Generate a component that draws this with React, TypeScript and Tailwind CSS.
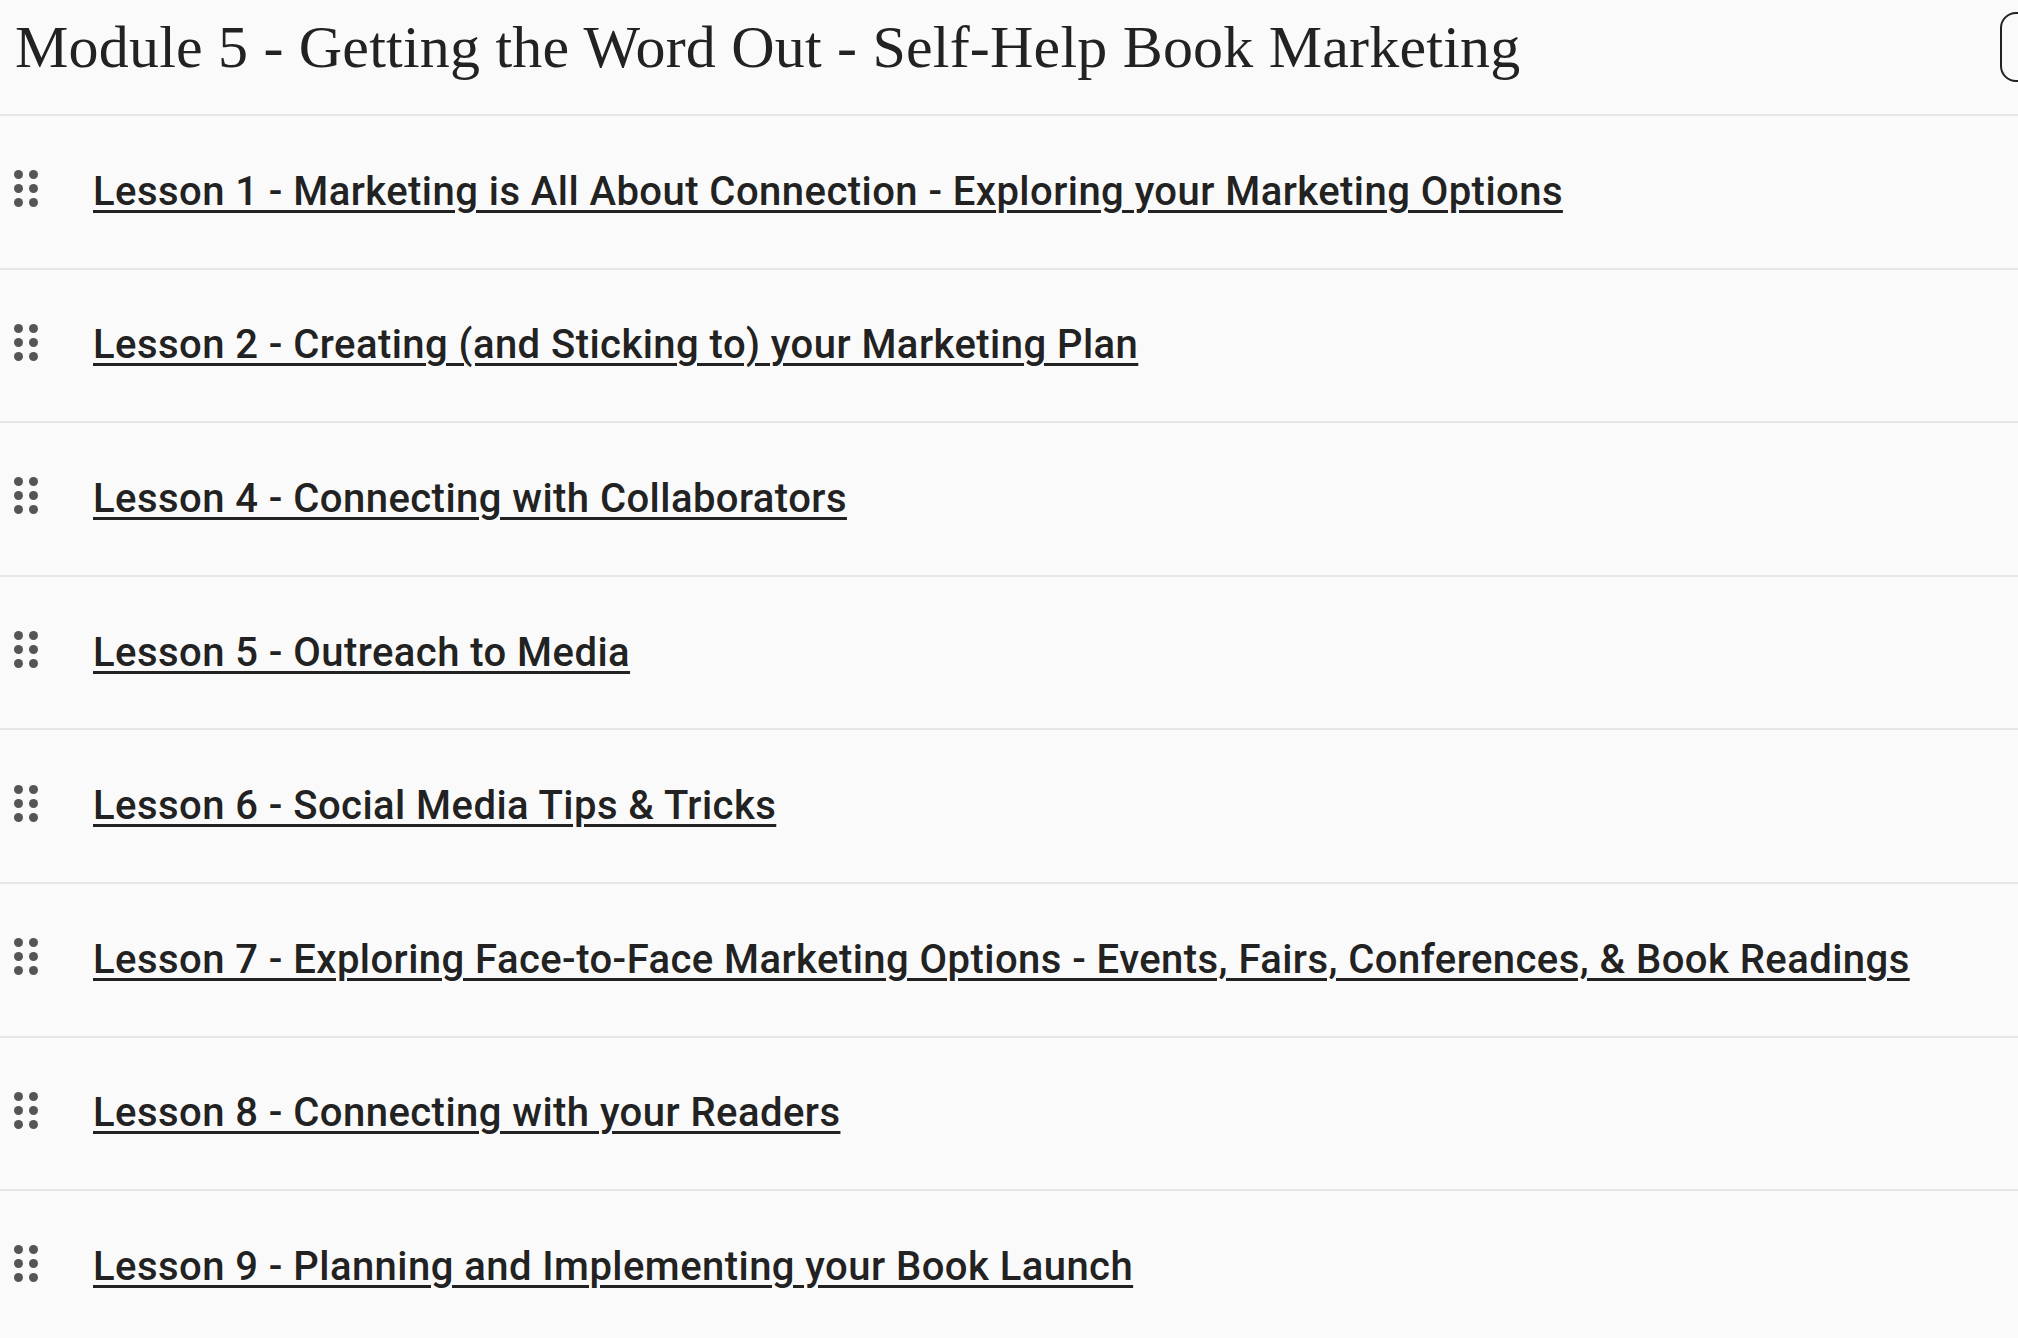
const lessons = [
  "Lesson 1 - Marketing is All About Connection - Exploring your Marketing Options",
  "Lesson 2 - Creating (and Sticking to) your Marketing Plan",
  "Lesson 4 - Connecting with Collaborators",
  "Lesson 5 - Outreach to Media",
  "Lesson 6 - Social Media Tips & Tricks",
  "Lesson 7 - Exploring Face-to-Face Marketing Options - Events, Fairs, Conferences, & Book Readings",
  "Lesson 8 - Connecting with your Readers",
  "Lesson 9 - Planning and Implementing your Book Launch",
];

const DragHandle = () => (
  <div className="grid grid-cols-2 gap-x-[6px] gap-y-[5px] w-[24px] mt-[-6px]">
    {Array.from({ length: 6 }).map((_, i) => (
      <span key={i} className="w-[9px] h-[9px] rounded-full bg-[#555555]" />
    ))}
  </div>
);

const App = () => {
  return (
    <div className="w-[2018px] h-[1338px] overflow-hidden bg-[#fafafa] text-[#222222]">
      <div className="flex items-start h-[116px] border-b-2 border-[#e6e6e6]">
        <h1
          className="flex-1 pl-[15px] pt-[12px] text-[60px] leading-[70px] font-normal tracking-[0.2px]"
          style={{ fontFamily: '"Liberation Serif", "Times New Roman", serif' }}
        >
          Module 5 - Getting the Word Out - Self-Help Book Marketing
        </h1>
        <button className="mt-[12px] mr-[-60px] w-[78px] h-[70px] shrink-0 rounded-[16px] border-2 border-[#222222] bg-[#fafafa]" />
      </div>

      <ul style={{ fontFamily: "Roboto, Inter, sans-serif" }}>
        {lessons.map((title) => (
          <li
            key={title}
            className="flex items-center h-[153.6px] border-b-2 border-[#e6e6e6]"
          >
            <div className="pl-[14px] w-[93px] shrink-0">
              <DragHandle />
            </div>
            <a
              href="#"
              className="text-[40px] font-medium tracking-[0.45px] underline decoration-[3px] underline-offset-[5px] text-[#222222]"
            >
              {title}
            </a>
          </li>
        ))}
      </ul>
    </div>
  );
};

export default App;
